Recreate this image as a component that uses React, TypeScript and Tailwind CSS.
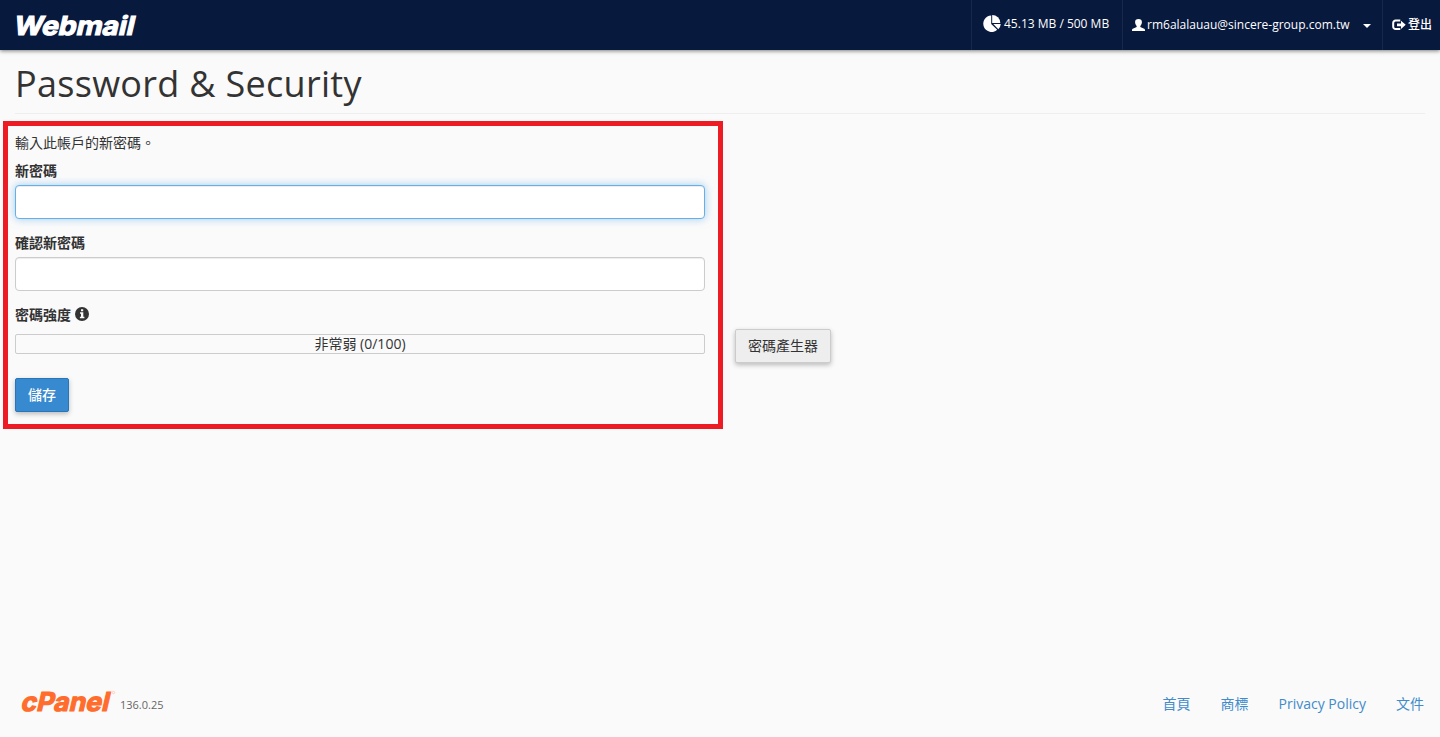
import React from "react";

function QuotaIcon() {
  return (
    <svg className="h-[17px] w-[18px] shrink-0" viewBox="0 0 18 17" fill="currentColor">
      <path d="M8.2 0.4 V8.9 L14.2 14.8 A8.3 8.3 0 1 1 8.2 0.4 Z" />
      <path d="M9.2 0 A8.1 8.1 0 0 1 17.3 8 H9.2 Z" />
      <path d="M10.3 9.1 H17.8 A8 8 0 0 1 15.3 14.2 Z" />
    </svg>
  );
}

function UserIcon() {
  return (
    <svg className="h-3 w-[13px] shrink-0" viewBox="0 0 13 12" fill="currentColor">
      <path d="M6.5 0 C8.7 0 10 1.2 9.9 3 C9.9 4.6 9.3 5.8 8.5 6.7 C8.1 7.3 8.2 7.9 8.8 8.2 L11.7 9.4 C12.6 9.8 13 10.3 13 11 V12 H0 V11 C0 10.3 .4 9.8 1.3 9.4 L4.2 8.2 C4.8 7.9 4.9 7.3 4.5 6.7 C3.7 5.8 3.1 4.6 3.1 3 C3 1.2 4.3 0 6.5 0 Z" />
    </svg>
  );
}

function LogoutIcon() {
  return (
    <svg className="h-3 w-3.5 shrink-0" viewBox="0 0 14 12">
      <path d="M8.3 1.5 H3.6 A2.4 2.4 0 0 0 1.2 3.9 V7.7 A2.4 2.4 0 0 0 3.6 10.1 H8.3" fill="none" stroke="currentColor" strokeWidth="2" />
      <path d="M9 1.8 L13.7 5.8 L9 9.9 V7.3 H5 V4.4 H9 Z" fill="currentColor" />
    </svg>
  );
}

function InfoIcon() {
  return (
    <svg className="mt-[-2px] size-3.5" viewBox="0 0 14 14">
      <circle cx="7" cy="7" r="7" fill="currentColor" />
      <path d="M6 2.2 H8.2 V4.2 H6 Z M5 5.3 H8.3 V9.8 H9.4 V11.3 H4.9 V9.8 H6 V6.8 H5 Z" fill="#fafafa" />
    </svg>
  );
}

function Header() {
  return (
    <header className="flex h-[50px] items-stretch bg-[#08193e] text-xs text-white shadow-[0_1px_4px_rgba(0,0,0,0.5)]">
      <a href="#" aria-label="Webmail" className="flex pl-0.5">
        <svg className="h-[50px] w-[150px] overflow-visible" viewBox="-10 0 150 50">
          <text x="0" y="0" transform="translate(0.4 35.4) skewX(-13)" textLength="120.5" lengthAdjust="spacingAndGlyphs" className="fill-white stroke-white stroke-[1.1px] font-['Inter',sans-serif] text-[26px] font-bold">Webmail</text>
        </svg>
      </a>
      <div className="ml-auto flex w-[151px] items-center gap-[3px] border-l border-[#17284c] pb-1 pl-[11px]">
        <QuotaIcon />
        <span className="whitespace-nowrap pt-0.5 font-medium">45.13 MB / 500 MB</span>
      </div>
      <button className="flex w-[260px] items-center border-l border-[#17284c] pb-px pl-[9px]">
        <UserIcon />
        <span className="ml-[2px] w-[204px] whitespace-nowrap text-left font-medium">rm6alalauau@sincere-group.com.tw</span>
        <span className="ml-3 mt-0.5 border-x-4 border-t-4 border-x-transparent border-t-white" />
      </button>
      <a href="#" className="flex w-[58px] items-center gap-0.5 border-l border-[#17284c] pb-px pl-[9px]">
        <LogoutIcon />
        <span className="whitespace-nowrap font-medium">登出</span>
      </a>
    </header>
  );
}

function Footer() {
  return (
    <footer className="mt-auto flex h-[57px] items-start justify-between pl-[11px] pr-4">
      <div className="flex">
        <svg className="h-[40px] w-[109px] overflow-visible" viewBox="-10 0 109 40" aria-label="cPanel">
          <text x="0" y="0" transform="translate(-1 30.7) skewX(-13)" textLength="88" lengthAdjust="spacingAndGlyphs" className="fill-[#ff6c2c] stroke-[#ff6c2c] stroke-[1.1px] font-['Inter',sans-serif] text-[26px] font-bold">cPanel</text>
          <circle cx="92.5" cy="12.5" r="1.2" fill="none" stroke="#ffb695" strokeWidth=".6" />
        </svg>
        <span className="mt-[17px] text-[11px] leading-4 text-[#666]">136.0.25</span>
      </div>
      <nav className="mt-[14px] flex gap-[30px] text-sm leading-5 text-[#428bca]">
        <a href="#">首頁</a>
        <a href="#">商標</a>
        <a href="#">Privacy Policy</a>
        <a href="#">文件</a>
      </nav>
    </footer>
  );
}

export default function App() {
  return (
    <div className="flex h-[737px] w-[1440px] flex-col bg-[#fafafa] font-['Open_Sans','Noto_Sans_CJK_TC',sans-serif] text-sm leading-5 text-[#333]">
      <Header />
      <h1 className="mx-[15px] h-16 border-b border-[#eee] pt-[14px] text-4xl leading-10 tracking-[0.3px] [font-weight:440]">Password &amp; Security</h1>
      <main className="flex items-start">
        <form className="ml-[3px] mt-[7px] flex h-[308px] w-[720px] flex-col items-start border-5 border-[#ed1c24] pl-[7px] pt-[7px]">
          <p className="mb-2">輸入此帳戶的新密碼。</p>
          <label htmlFor="pw" className="mb-1 font-bold">新密碼</label>
          <input id="pw" type="password" className="h-[34px] w-[690px] rounded border border-[#66afe9] bg-white shadow-[inset_0_1px_1px_rgba(0,0,0,0.075),0_0_8px_rgba(102,175,233,0.6)] outline-none" />
          <label htmlFor="confirm" className="mb-1 mt-[14px] font-bold">確認新密碼</label>
          <input id="confirm" type="password" className="h-[34px] w-[690px] rounded border border-[#ccc] bg-white shadow-[inset_0_1px_1px_rgba(0,0,0,0.075)] outline-none" />
          <div className="mt-[14px] flex items-center gap-1 font-bold">密碼強度<InfoIcon /></div>
          <div className="mt-[9px] h-5 w-[690px] rounded-xs border border-[#ccc] text-center leading-[18px]">非常弱 (0/100)</div>
          <button type="button" className="mt-6 h-[34px] w-[54px] rounded-xs border border-[#2a75ba] bg-[#3789d0] font-medium text-white shadow-[0_2px_5px_rgba(0,0,0,0.26)]">儲存</button>
        </form>
        <button className="ml-3 mt-[215px] h-[34px] w-24 rounded-xs border border-[#ccc] bg-[#eee] shadow-[0_2px_5px_rgba(0,0,0,0.26)]">密碼產生器</button>
      </main>
      <Footer />
    </div>
  );
}
